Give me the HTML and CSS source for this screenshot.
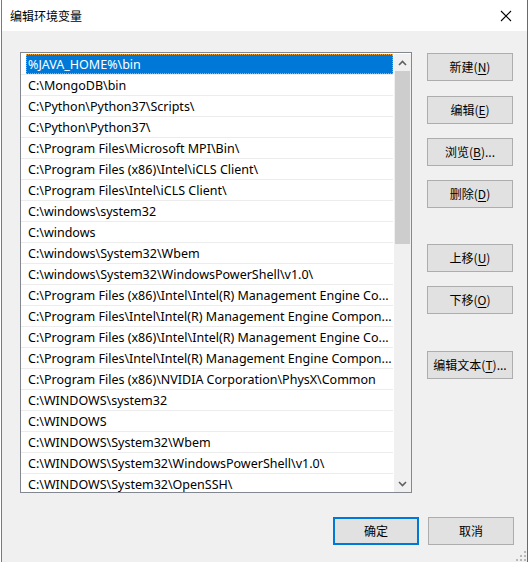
FILE: index.html
```html
<!DOCTYPE html>
<html lang="zh-CN">
<head>
<meta charset="utf-8">
<title>编辑环境变量</title>
<link rel="stylesheet" href="styles.css">
</head>
<body>
<div class="dialog">
  <div class="titlebar">
    <span class="title">编辑环境变量</span>
    <svg class="close" width="12" height="12" viewBox="0 0 12 12"><path d="M1 1 L11 11 M11 1 L1 11" stroke="#000" stroke-width="1.1" fill="none"/></svg>
  </div>
  <div class="body">
    <div class="main">
      <div class="list">
        <div class="rows">
          <div class="row selected"><span class="label">%JAVA_HOME%\bin</span></div>
          <div class="row"><span class="label">C:\MongoDB\bin</span></div>
          <div class="row"><span class="label">C:\Python\Python37\Scripts\</span></div>
          <div class="row"><span class="label">C:\Python\Python37\</span></div>
          <div class="row"><span class="label">C:\Program Files\Microsoft MPI\Bin\</span></div>
          <div class="row"><span class="label">C:\Program Files (x86)\Intel\iCLS Client\</span></div>
          <div class="row"><span class="label">C:\Program Files\Intel\iCLS Client\</span></div>
          <div class="row"><span class="label">C:\windows\system32</span></div>
          <div class="row"><span class="label">C:\windows</span></div>
          <div class="row"><span class="label">C:\windows\System32\Wbem</span></div>
          <div class="row"><span class="label">C:\windows\System32\WindowsPowerShell\v1.0\</span></div>
          <div class="row"><span class="label">C:\Program Files (x86)\Intel\Intel(R) Management Engine Co...</span></div>
          <div class="row"><span class="label">C:\Program Files\Intel\Intel(R) Management Engine Compon...</span></div>
          <div class="row"><span class="label">C:\Program Files (x86)\Intel\Intel(R) Management Engine Co...</span></div>
          <div class="row"><span class="label">C:\Program Files\Intel\Intel(R) Management Engine Compon...</span></div>
          <div class="row"><span class="label">C:\Program Files (x86)\NVIDIA Corporation\PhysX\Common</span></div>
          <div class="row"><span class="label">C:\WINDOWS\system32</span></div>
          <div class="row"><span class="label">C:\WINDOWS</span></div>
          <div class="row"><span class="label">C:\WINDOWS\System32\Wbem</span></div>
          <div class="row"><span class="label">C:\WINDOWS\System32\WindowsPowerShell\v1.0\</span></div>
          <div class="row"><span class="label">C:\WINDOWS\System32\OpenSSH\</span></div>
        </div>
        <div class="scrollbar">
          <div class="arrow">
            <svg width="9" height="6" viewBox="0 0 9 6"><path d="M1 5 L4.5 1.5 L8 5" stroke="#606060" stroke-width="1.6" fill="none"/></svg>
          </div>
          <div class="track"><div class="thumb"></div></div>
          <div class="arrow">
            <svg width="9" height="6" viewBox="0 0 9 6"><path d="M1 1 L4.5 4.5 L8 1" stroke="#606060" stroke-width="1.6" fill="none"/></svg>
          </div>
        </div>
      </div>
      <div class="side">
        <button class="btn b-new">新建(<u>N</u>)</button>
        <button class="btn b-edit">编辑(<u>E</u>)</button>
        <button class="btn b-browse">浏览(<u>B</u>)...</button>
        <button class="btn b-del">删除(<u>D</u>)</button>
        <button class="btn b-up">上移(<u>U</u>)</button>
        <button class="btn b-down">下移(<u>O</u>)</button>
        <button class="btn b-text">编辑文本(<u>T</u>)...</button>
      </div>
    </div>
    <div class="footer">
      <button class="btn primary">确定</button>
      <button class="btn">取消</button>
    </div>
  </div>
  <div class="grip">
    <span class="dot d1"></span><span class="dot d2"></span><span class="dot d3"></span>
    <span class="dot d4"></span><span class="dot d5"></span><span class="dot d6"></span>
  </div>
</div>
</body>
</html>
```

FILE: styles.css
```css
* { box-sizing: border-box; }
html, body { margin: 0; padding: 0; }
body {
  width: 529px;
  height: 562px;
  background: #ffffff;
  font-family: "Noto Sans", "Noto Sans CJK SC", sans-serif;
  font-size: 12px;
  color: #000;
  overflow: hidden;
}
.dialog {
  position: relative;
  margin-left: 1px;
  width: 527px;
  height: 562px;
  border-left: 1px solid #7a7a7a;
  border-right: 1px solid #6a6a6a;
  background: #f0f0f0;
  display: flex;
  flex-direction: column;
}
.titlebar {
  height: 31px;
  background: #ffffff;
  display: flex;
  align-items: center;
  justify-content: space-between;
  padding: 0 15px 0 8px;
}
.title {
  font-family: "Noto Sans CJK SC", sans-serif;
  font-size: 12px;
  line-height: 16px;
  margin-top: 1px;
}
.close { display: block; }
.body {
  flex: 1;
  display: flex;
  flex-direction: column;
  padding: 21px 0 0 18px;
}
.main {
  display: flex;
  gap: 15px;
}
.list {
  width: 392px;
  height: 441px;
  border: 1px solid #828790;
  background: #fff;
  display: flex;
  padding: 1px 0 0 0;
  overflow: hidden;
}
.rows {
  flex: 1;
  min-width: 0;
  padding-right: 1px;
}
.row {
  height: 21px;
  border-bottom: 1px solid #ececec;
  white-space: nowrap;
  overflow: hidden;
}
.label {
  display: block;
  height: 20px;
  line-height: 16px;
  padding-top: 3px;
  padding-left: 7px;
  font-size: 12.5px;
}
.row.selected .label {
  margin-left: 5px;
  padding-left: 2px;
  background: #0078d7;
  color: #fff;
  outline: 1px dotted #f0a030;
  outline-offset: -1px;
}
.scrollbar {
  width: 17px;
  background: #f0f0f0;
  display: flex;
  flex-direction: column;
}
.arrow {
  height: 17px;
  display: flex;
  align-items: center;
  justify-content: center;
}
.arrow svg { display: block; }
.track { flex: 1; }
.thumb {
  height: 173px;
  margin: 0 1px;
  background: #cdcdcd;
}
.side {
  display: flex;
  flex-direction: column;
  padding-top: 1px;
}
.btn {
  width: 86px;
  height: 28px;
  border: 1px solid #adadad;
  background: #e1e1e1;
  font-family: "Noto Sans CJK SC", sans-serif;
  font-size: 12px;
  color: #000;
  padding: 0;
  margin: 0;
  line-height: 16px;
}
.btn u { text-underline-offset: 2px; }
.b-edit { margin-top: 15px; }
.b-browse { margin-top: 14px; }
.b-del { margin-top: 14px; }
.b-up { margin-top: 36px; }
.b-down { margin-top: 14px; }
.b-text { margin-top: 37px; }
.footer {
  display: flex;
  justify-content: flex-end;
  gap: 9px;
  padding: 24px 13px 0 0;
}
.btn.primary {
  border: 2px solid #0078d7;
}
.grip {
  position: absolute;
  right: 1px;
  bottom: 1px;
  width: 10px;
  height: 10px;
}
.dot {
  position: absolute;
  width: 2px;
  height: 2px;
  background: #b8b8b8;
}
.d1 { right: 0; bottom: 0; }
.d2 { right: 4px; bottom: 0; }
.d3 { right: 8px; bottom: 0; }
.d4 { right: 0; bottom: 4px; }
.d5 { right: 4px; bottom: 4px; }
.d6 { right: 0; bottom: 8px; }
```
